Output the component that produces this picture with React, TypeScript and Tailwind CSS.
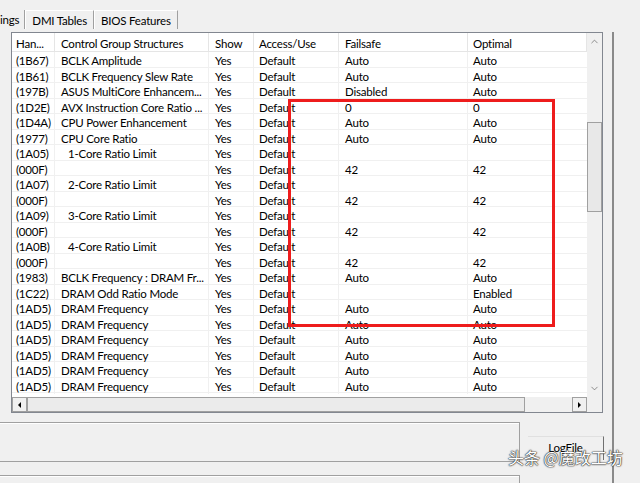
import { ChevronUp, ChevronDown } from "lucide-react";

type Row = {
  handle: string;
  name: string;
  indent?: boolean;
  failsafe: string;
  optimal: string;
};

const rows: Row[] = [
  { handle: "(1B67)", name: "BCLK Amplitude", failsafe: "Auto", optimal: "Auto" },
  { handle: "(1B61)", name: "BCLK Frequency Slew Rate", failsafe: "Auto", optimal: "Auto" },
  { handle: "(197B)", name: "ASUS MultiCore Enhancem...", failsafe: "Disabled", optimal: "Auto" },
  { handle: "(1D2E)", name: "AVX Instruction Core Ratio ...", failsafe: "0", optimal: "0" },
  { handle: "(1D4A)", name: "CPU Power Enhancement", failsafe: "Auto", optimal: "Auto" },
  { handle: "(1977)", name: "CPU Core Ratio", failsafe: "Auto", optimal: "Auto" },
  { handle: "(1A05)", name: "1-Core Ratio Limit", indent: true, failsafe: "", optimal: "" },
  { handle: "(000F)", name: "", failsafe: "42", optimal: "42" },
  { handle: "(1A07)", name: "2-Core Ratio Limit", indent: true, failsafe: "", optimal: "" },
  { handle: "(000F)", name: "", failsafe: "42", optimal: "42" },
  { handle: "(1A09)", name: "3-Core Ratio Limit", indent: true, failsafe: "", optimal: "" },
  { handle: "(000F)", name: "", failsafe: "42", optimal: "42" },
  { handle: "(1A0B)", name: "4-Core Ratio Limit", indent: true, failsafe: "", optimal: "" },
  { handle: "(000F)", name: "", failsafe: "42", optimal: "42" },
  { handle: "(1983)", name: "BCLK Frequency : DRAM Fr...", failsafe: "Auto", optimal: "Auto" },
  { handle: "(1C22)", name: "DRAM Odd Ratio Mode", failsafe: "", optimal: "Enabled" },
  { handle: "(1AD5)", name: "DRAM Frequency", failsafe: "Auto", optimal: "Auto" },
  { handle: "(1AD5)", name: "DRAM Frequency", failsafe: "Auto", optimal: "Auto" },
  { handle: "(1AD5)", name: "DRAM Frequency", failsafe: "Auto", optimal: "Auto" },
  { handle: "(1AD5)", name: "DRAM Frequency", failsafe: "Auto", optimal: "Auto" },
  { handle: "(1AD5)", name: "DRAM Frequency", failsafe: "Auto", optimal: "Auto" },
  { handle: "(1AD5)", name: "DRAM Frequency", failsafe: "Auto", optimal: "Auto" },
];

const cols = "grid grid-cols-[43px_154px_45px_85px_129px_119px]";
const cell = "block whitespace-nowrap leading-[14px] pt-[2px]";
const head = "block whitespace-nowrap leading-[14px] pt-[4px] border-r border-[#e5e5e5]";
const peek = "block whitespace-nowrap leading-[14px] pt-[2px]";

export default function App() {
  return (
    <div className="relative h-[483px] w-[640px] overflow-hidden bg-[#f0f0f0] font-['Lato','Liberation_Sans',sans-serif] text-[11.5px] leading-none tracking-[-0.2px] text-black">
      {/* tab strip */}
      <div className="flex h-[29px] pt-[10px]">
        <div className="flex h-[19px] items-center border-r border-[#a0a0a0] pr-[5px] pt-[1px]">ings</div>
        <div className="flex h-[19px] items-center border-l border-t border-r border-l-white border-t-white border-r-[#a0a0a0] px-[6px] pt-[1px]">DMI Tables</div>
        <div className="flex h-[19px] items-center border-l border-t border-r border-l-white border-t-white border-r-[#a0a0a0] px-[6px] pt-[1px]">BIOS Features</div>
      </div>

      <div className="h-[454px] w-[614px] border-r-2 border-r-[#8a8a8a]">
        {/* list view */}
        <div className="ml-[11px] mt-[3px] flex h-[381px] w-[592px] flex-col border border-[#828790] bg-white">
          <div className="flex h-[364px]">
            <div className="h-full w-[575px] overflow-hidden">
              <div className={`${cols} h-[19px] border-b border-[#e5e5e5]`}>
                <span className={`${head} pl-[4px]`}>Han...</span>
                <span className={`${head} pl-[6px]`}>Control Group Structures</span>
                <span className={`${head} pl-[6px]`}>Show</span>
                <span className={`${head} pl-[5px]`}>Access/Use</span>
                <span className={`${head} pl-[6px]`}>Failsafe</span>
                <span className={`${head} pl-[5px]`}>Optimal</span>
              </div>
              {rows.map((r, i) => (
                <div key={i} className={`${cols} h-[15.5px] border-b border-[#f0f0f0]`}>
                  <span className={`${cell} border-r border-[#f0f0f0] pl-[4px]`}>{r.handle}</span>
                  <span className={`${cell} border-r border-[#f0f0f0] ${r.indent ? "pl-[13px]" : "pl-[6px]"}`}>{r.name}</span>
                  <span className={`${cell} border-r border-[#f0f0f0] pl-[6px]`}>Yes</span>
                  <span className={`${cell} border-r border-[#f0f0f0] pl-[5px]`}>Default</span>
                  <span className={`${cell} border-r border-[#f0f0f0] pl-[6px]`}>{r.failsafe}</span>
                  <span className={`${cell} pl-[5px]`}>{r.optimal}</span>
                </div>
              ))}
              {/* next row, mostly hidden under the scrollbar */}
              <div className={`${cols} h-[15.5px]`}>
                <span className={`${peek} pl-[4px]`}>(1AD6)</span>
                <span className={`${peek} pl-[6px]`}>DRAM Odd Ratio Mode</span>
                <span className={`${peek} pl-[6px]`}>Yes</span>
                <span className={`${peek} pl-[5px]`}>Default</span>
                <span className={`${peek} pl-[6px]`}>Disabled</span>
                <span className={`${peek} pl-[5px]`}>Disabled</span>
              </div>
            </div>
            {/* vertical scrollbar */}
            <div className="flex w-[15px] flex-col items-center bg-[#f0f0f0]">
              <div className="flex h-[17px] w-full items-center justify-center">
                <ChevronUp size={11} strokeWidth={1.5} className="text-[#606060]" />
              </div>
              <div className="mt-[72px] h-[90px] w-[15px] border border-[#a0a0a0] bg-[#e8e8e8]" />
              <div className="flex-1" />
              <div className="flex h-[17px] w-full items-center justify-center">
                <ChevronDown size={11} strokeWidth={1.5} className="text-[#606060]" />
              </div>
            </div>
          </div>
          {/* horizontal scrollbar */}
          <div className="flex h-[15px] bg-[#f0f0f0]">
            <div className="flex w-[15px] items-center justify-center border border-[#a0a0a0] bg-[#f0f0f0]">
              <span className="h-0 w-0 border-y-[3px] border-r-[3px] border-y-transparent border-r-black" />
            </div>
            <div className="w-[498px] border border-[#a0a0a0] bg-[#ebebeb]" />
            <div className="flex-1" />
            <div className="flex w-[15px] items-center justify-center border border-[#a0a0a0] bg-[#f0f0f0]">
              <span className="h-0 w-0 border-y-[3px] border-l-[3px] border-y-transparent border-l-black" />
            </div>
            <div className="w-[15px]" />
          </div>
        </div>

        {/* lower frames */}
        <div className="mt-[9px] flex">
          <div className="flex w-[520px] flex-col">
            <div className="h-[40px] border-y border-r border-[#a0a0a0] shadow-[inset_0_1px_0_#fff]" />
            <div className="mt-[13px] h-[20px] border-t border-r border-[#a0a0a0] shadow-[inset_0_1px_0_#fff]" />
          </div>
          <div className="ml-[8px] mt-[14px] flex h-[24px] w-[76px] items-center justify-center border-t border-r border-t-[#e0e0e0] border-r-[#707070] bg-[#f0f0f0] pb-[1px]">
            LogFile
          </div>
        </div>
      </div>

      {/* red annotation */}
      <div className="absolute left-[288px] top-[99px] h-[228px] w-[267px] border-[3px] border-[#ee1c1c]" />

      {/* watermark */}
      <div className="absolute left-[508px] top-[449px] font-['Noto_Sans_CJK_SC',sans-serif] text-[16px] leading-none tracking-normal text-white [text-shadow:0_0_1px_#222,0_0_1px_#222,0_0_2px_#444]">
        头条 @魔改工坊
      </div>
    </div>
  );
}
